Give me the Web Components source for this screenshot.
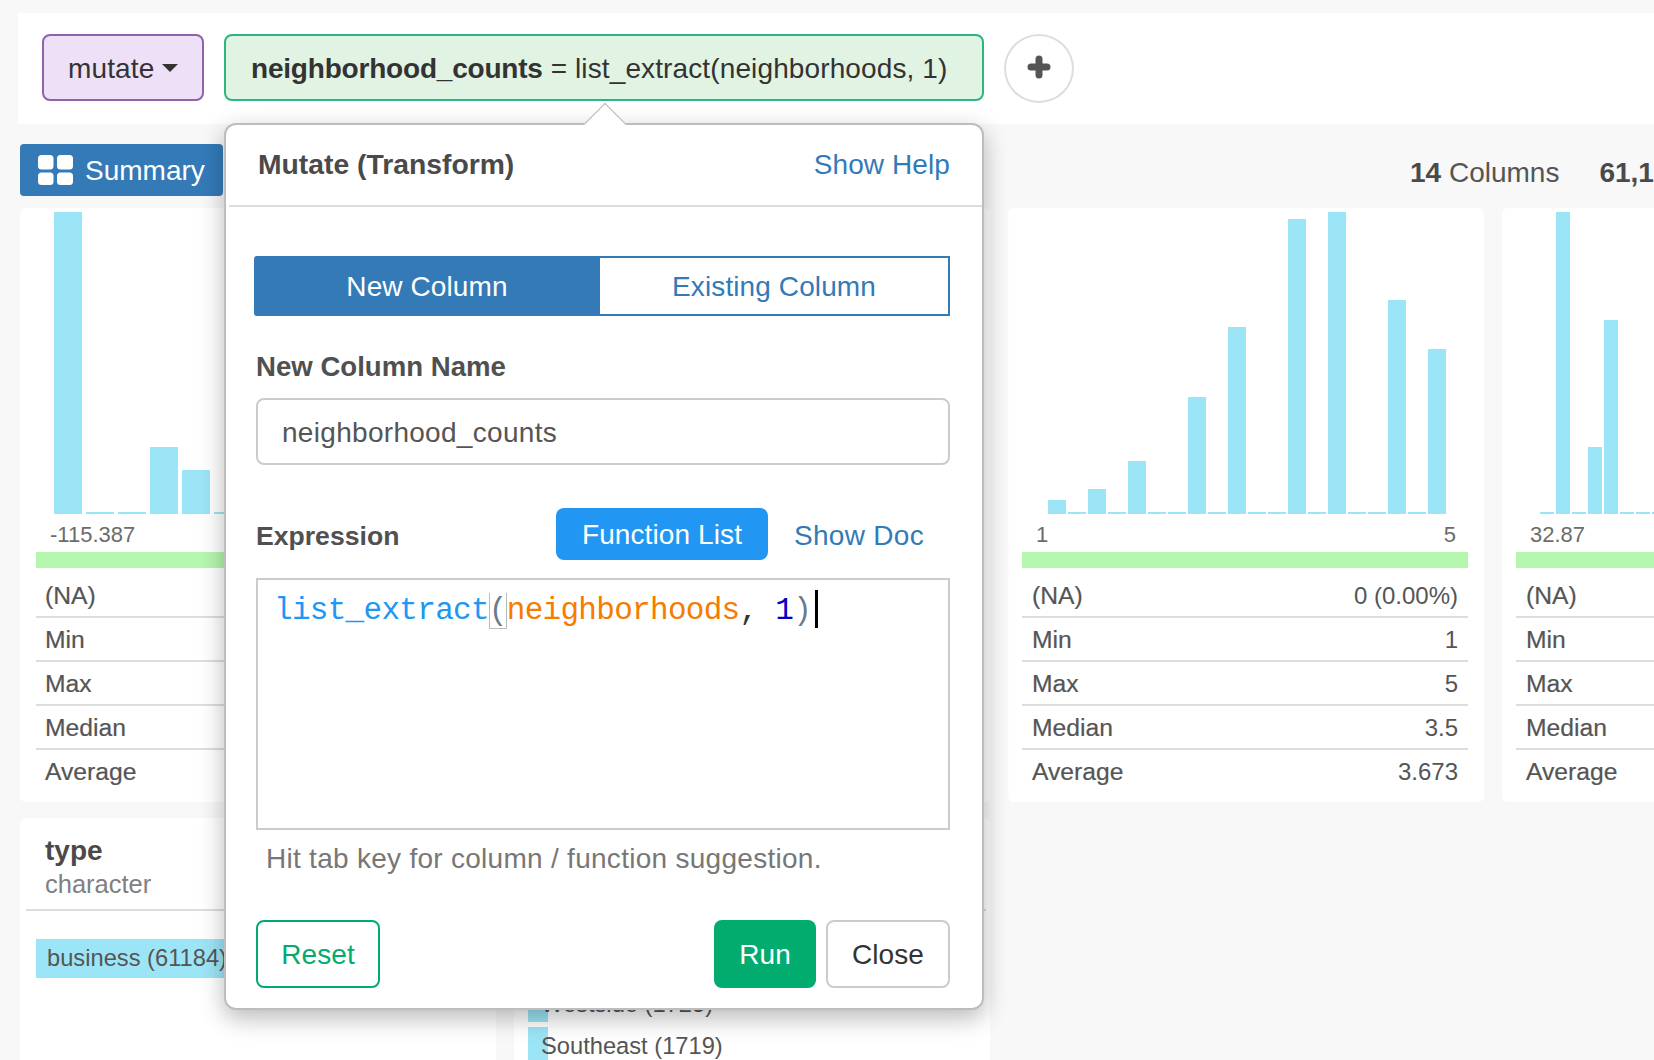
<!DOCTYPE html>
<html lang="en"><head><meta charset="utf-8"><title>Mutate</title>
<style>
html,body{margin:0;padding:0;width:1654px;height:1060px;overflow:hidden;background:#f8f8f8;font-family:"Liberation Sans",Arial,sans-serif;color:#555}
</style></head><body>
<x-app>
  <x-toolbar slot="top">
    <x-chip kind="verb">mutate</x-chip>
    <x-chip kind="expr"><b>neighborhood_counts</b> = list_extract(neighborhoods, 1)</x-chip>
    <x-plus></x-plus>
  </x-toolbar>
  <x-summary-bar slot="top"></x-summary-bar>
  <x-grid>
    <x-stat-card inset="16" tx="9" pad="18" bw="28" gap="4" bars="302,2,2,67,44,2" min="-115.387"
      stats="(NA)|;Min|;Max|;Median|;Average|"></x-stat-card>
    <x-stat-card blank></x-stat-card>
    <x-stat-card inset="14" tx="10" pad="26" bw="18" gap="2" bars="14,2,25,2,53,2,2,117,2,187,2,2,295,2,302,2,2,214,2,165" min="1" max="5"
      stats="(NA)|0 (0.00%);Min|1;Max|5;Median|3.5;Average|3.673"></x-stat-card>
    <x-stat-card inset="14" tx="10" pad="24" bw="14" gap="2" bars="2,302,2,67,194,2,2,2,2,2" min="32.87"
      stats="(NA)|;Min|;Max|;Median|;Average|"></x-stat-card>
    <x-cat-card name="type" datatype="character" inset="10" np="19">
      <x-cat-row w="420" tx="11" text="business (61184)"></x-cat-row>
    </x-cat-card>
    <x-cat-card inset="8" np="19">
      <x-cat-row w="20"></x-cat-row>
      <x-cat-row w="20" tx="13" dy="2" text="Westside (1725)"></x-cat-row>
      <x-cat-row w="20" tx="13" text="Southeast (1719)"></x-cat-row>
    </x-cat-card>
  </x-grid>
  <x-popover></x-popover>
</x-app>
<script>
function def(name, css, html, setup){
  customElements.define(name, class extends HTMLElement{
    constructor(){super();this.attachShadow({mode:'open'});}
    connectedCallback(){
      const a=n=>this.getAttribute(n);
      this.shadowRoot.innerHTML='<style>'+css+'</style>'+(typeof html==='function'?html(a,this):html);
      if(setup)setup(this,a);
    }
  });
}
def('x-app',`:host{display:block;width:1654px;height:1060px;overflow:hidden;position:relative}`,`<slot name="top"></slot><slot></slot>`);
def('x-toolbar',`:host{display:flex;align-items:flex-start;gap:20px;margin:13px 0 0 18px;padding:21px 24px 0;height:90px;background:#fff;box-sizing:content-box}`,`<slot></slot>`);
def('x-chip',`:host{display:flex;align-items:center;flex:none;box-sizing:border-box;height:67px;border-radius:8px;border:2px solid;font-size:28px;color:#333;white-space:nowrap;padding-top:2px}
:host([kind=verb]){width:162px;padding-left:24px;background:#eee0f7;border-color:#8f63ab}
:host([kind=expr]){width:760px;padding-left:25px;background:#e1f3e2;border-color:#2bb680}
.t{letter-spacing:.12px}
::slotted(b){letter-spacing:-.2px}
.c{width:0;height:0;margin:-2px 0 0 8px;border:8px solid transparent;border-top-color:#333;border-bottom:0}`,
(a)=>`<div class="t"><slot></slot></div>`+(a('kind')==='verb'?'<span class="c"></span>':''));
def('x-plus',`:host{display:flex;align-items:center;justify-content:center;flex:none;box-sizing:border-box;width:70px;height:69px;border:2px solid #ddd;border-radius:50%;background:#fff}
svg{margin-bottom:3px}`,
`<svg width="24" height="24" viewBox="0 0 24 24"><path d="M12 4v16M4 12h16" stroke="#555" stroke-width="7" stroke-linecap="round" fill="none"/></svg>`);
def('x-summary-bar',`:host{display:flex;align-items:center;margin:20px 0 0 20px;height:52px;white-space:nowrap;font-size:28px;color:#555}
.b{display:flex;align-items:center;gap:12px;flex:none;box-sizing:border-box;width:203px;height:52px;padding-left:18px;background:#337ab7;color:#fff;border-radius:4px}
.b span{padding-top:2px}
.r{margin:6px 0 0 1187px;display:flex;gap:40px;flex:none}
b{color:#4a4a4a}`,
`<div class="b"><svg width="35" height="30" viewBox="0 0 35 30" fill="#fff"><rect x="0" y="0" width="15.5" height="14.5" rx="3.5"/><rect x="19" y="0" width="16" height="14.5" rx="3.5"/><rect x="0" y="17.5" width="15.5" height="12.5" rx="3.5"/><rect x="19" y="17.5" width="16" height="12.5" rx="3.5"/></svg><span>Summary</span></div>
<div class="r"><span><b>14</b> Columns</span><span><b>61,184</b> Rows</span></div>`);
def('x-grid',`:host{display:grid;grid-template-columns:repeat(4,476px);grid-template-rows:594px 260px;column-gap:18px;row-gap:16px;margin:12px 0 0 20px;width:2000px}`,`<slot></slot>`);
def('x-stat-card',`:host{display:block;background:#fff;border-radius:6px;box-sizing:border-box;padding:4px 16px 0 0}
.w{margin-left:var(--i)}
.h{display:flex;align-items:flex-end;gap:var(--g);height:302px;padding-left:var(--p)}
.h i{display:block;width:var(--w);flex:none;background:#9ce5f6}
.l{display:flex;justify-content:space-between;height:38px;align-items:center;font-size:22px;color:#6c6c6c;padding:4px 12px 0 0;box-sizing:border-box}
.l span:first-child{padding-left:14px}
.m{height:16px;background:#b5f7ae}
.s{margin-top:6px}
.s div{display:flex;justify-content:space-between;align-items:center;box-sizing:border-box;height:44px;padding:2px 10px 0 var(--tx);color:#555;border-bottom:2px solid #ddd}
.s div:last-child{border-bottom:0;padding-top:0}
.s span:first-child{font-size:24.7px;-webkit-text-stroke:.2px #555}
.s span:last-child{font-size:24px}`,
(a)=>{
  if(a('blank')!==null)return '';
  const bars=(a('bars')||'').split(',').map(h=>`<i style="height:${h}px"></i>`).join('');
  const st=(a('stats')||'').split(';').map(r=>{const[p,q]=r.split('|');return `<div><span>${p}</span><span>${q}</span></div>`}).join('');
  return `<div class="w" style="--i:${a('inset')}px;--tx:${a('tx')}px"><div class="h" style="--g:${a('gap')}px;--w:${a('bw')}px;--p:${a('pad')}px">${bars}</div>
  <div class="l"><span>${a('min')}</span><span>${a('max')||''}</span></div><div class="m"></div><div class="s">${st}</div></div>`;
});
def('x-cat-card',`:host{display:block;background:#fff;border-radius:6px;overflow:hidden;box-sizing:border-box;padding:0 4px 0 6px}
.h{box-sizing:border-box;height:93px;padding:15px 0 0 var(--n);border-bottom:2px solid #ddd}
.n{font-size:28px;font-weight:bold;color:#4a4a4a;line-height:36px;height:36px}
.t{font-size:25.5px;color:#808080;line-height:30px}
.b{padding:28px 0 0 var(--i);display:flex;flex-direction:column;gap:5px}`,
(a)=>`<div class="h" style="--n:${a('np')}px"><div class="n">${a('name')||''}</div><div class="t">${a('datatype')||''}</div></div><div class="b" style="--i:${a('inset')}px"><slot></slot></div>`);
def('x-cat-row',`:host{display:block;position:relative;height:39px;font-size:23.7px;color:#555;white-space:nowrap}
.f{position:absolute;left:0;top:0;bottom:0;background:#9ce5f6}
.x{position:relative;line-height:39px}`,
(a)=>`<div class="f" style="width:${a('w')}px"></div><div class="x" style="padding:${a('dy')||0}px 0 0 ${a('tx')||0}px">${a('text')||''}</div>`);
def('x-popover',`:host{position:absolute;left:224px;top:123px;width:760px;height:887px;box-sizing:border-box;background:#fff;border:2px solid #bdbdbd;border-radius:12px;box-shadow:0 8px 24px rgba(0,0,0,.28);font-size:28px;color:#555;z-index:5;letter-spacing:.1px}
.ar{position:absolute;left:364px;top:-16px;width:30px;height:30px;transform:rotate(45deg);background:#fff;border-left:1px solid #b5b5b5;border-top:1px solid #b5b5b5;box-sizing:border-box}
.hd{display:flex;justify-content:space-between;align-items:center;box-sizing:content-box;height:80px;padding:0 32px 0 29px;margin:0 0 0 3px;border-bottom:2px solid #ddd;position:relative}
.hd b{color:#4a4a4a;font-size:28.3px;letter-spacing:0;margin-top:-2px}
a{color:#337ab7;text-decoration:none}
.bd{padding:0 0 0 30px}
.tabs{display:flex;margin:49px 0 0 -2px;height:60px;box-sizing:border-box;width:696px;border-radius:2px}
.tabs div{display:flex;align-items:center;justify-content:center;box-sizing:border-box;padding-top:2px}
.t1{width:346px;background:#337ab7;color:#fff;border-radius:3px 0 0 3px}
.t2{flex:1;border:2px solid #337ab7;border-left:0;color:#337ab7}
.lb{font-weight:bold;color:#505050;line-height:36px;font-size:27.6px;letter-spacing:0}
.in{box-sizing:border-box;height:67px;margin-top:13px;padding:2px 0 0 24px;display:flex;align-items:center;border:2px solid #ccc;border-radius:8px;width:694px;letter-spacing:.3px;color:#555}
.ex{display:flex;align-items:center;margin-top:43px;height:52px;width:694px}
.ex .lb{flex:1;font-size:26.6px;margin-top:3px}
.fl{display:flex;align-items:center;justify-content:center;box-sizing:border-box;padding-top:2px;width:212px;height:52px;background:#2196f3;color:#fff;border-radius:8px}
.sd{width:182px;text-align:center;box-sizing:border-box;padding:3px 0 0 0;letter-spacing:.3px}
.ed{box-sizing:border-box;width:694px;height:252px;margin-top:18px;border:2px solid #ccc;padding:11px 0 0 16px;font:31px/40px "Liberation Mono","DejaVu Sans Mono",monospace;white-space:pre;color:#333;letter-spacing:-.7px}
.fn{color:#2196f3}.p{color:#6b7a90}.v{color:#f57c00}.nm{color:#0000c8}
.br{display:inline-block;box-shadow:inset 1px 0 #bbb,inset -1px 0 #bbb,inset 0 -1px #bbb;height:36px;vertical-align:top;margin-top:2px;line-height:36px}
.cu{display:inline-block;width:3px;height:38px;background:#000;vertical-align:top;margin:-1px 0 0 4px}
.hn{margin:12px 0 0 10px;line-height:34px;color:#777;letter-spacing:.28px;font-size:28px}
.ft{display:flex;margin-top:44px;align-items:stretch;height:68px;width:694px}
.btn{display:flex;align-items:center;justify-content:center;box-sizing:border-box;border-radius:8px;height:68px;padding-top:2px}
.rs{width:124px;border:2px solid #02ab6e;color:#02ab6e;margin-right:auto}
.ru{width:102px;background:#02ab6e;color:#fff;margin-right:10px}
.cl{width:124px;border:2px solid #ccc;color:#333}`,
`<div class="ar"></div>
<div class="hd"><b>Mutate (Transform)</b><a>Show Help</a></div>
<div class="bd">
<div class="tabs"><div class="t1">New Column</div><div class="t2">Existing Column</div></div>
<div class="lb" style="margin-top:33px">New Column Name</div>
<div class="in">neighborhood_counts</div>
<div class="ex"><div class="lb">Expression</div><div class="fl">Function List</div><a class="sd">Show Doc</a></div>
<div class="ed"><span class="fn">list_extract</span><span class="p br">(</span><span class="v">neighborhoods</span>, <span class="nm">1</span><span class="p">)</span><span class="cu"></span></div>
<div class="hn">Hit tab key for column / function suggestion.</div>
<div class="ft"><div class="btn rs">Reset</div><div class="btn ru">Run</div><div class="btn cl">Close</div></div>
</div>`);
</script>
</body></html>
